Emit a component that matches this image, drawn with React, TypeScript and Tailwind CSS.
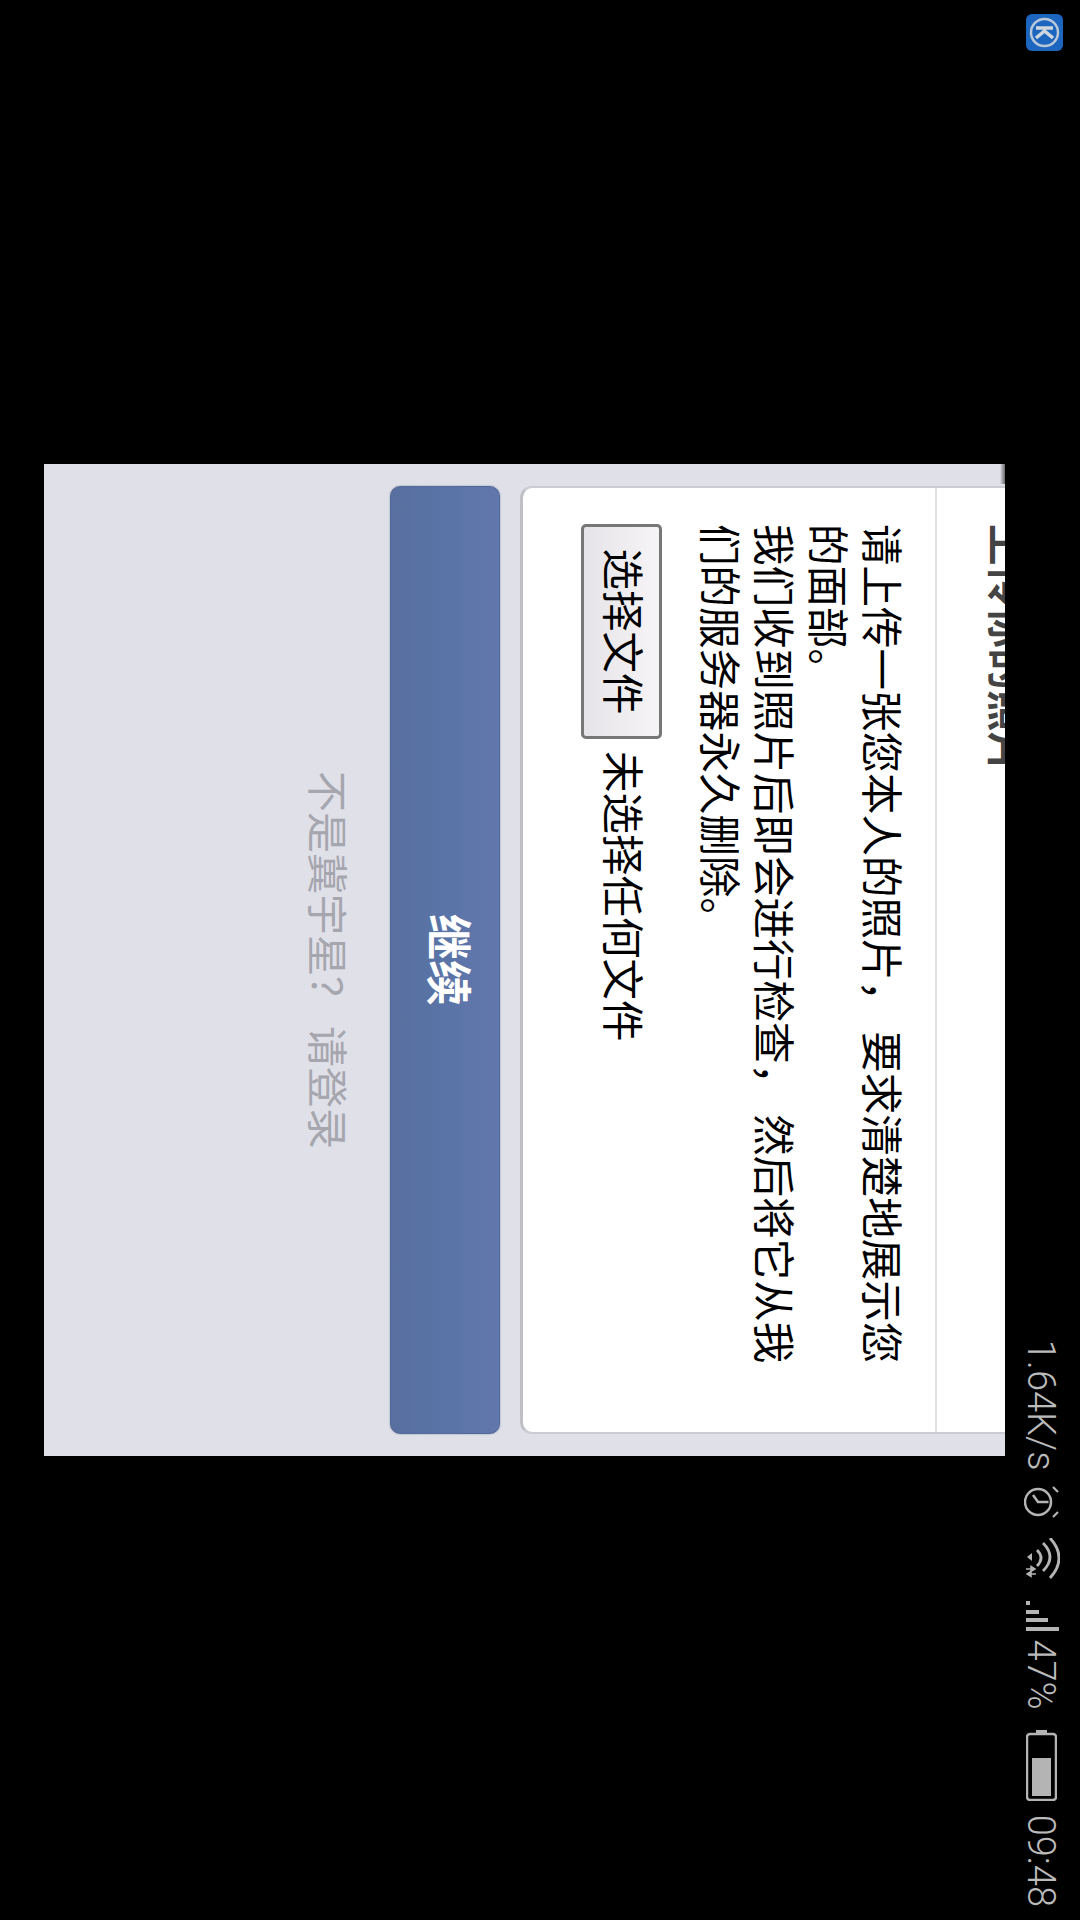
const cjk = "font-['Noto_Sans_CJK_SC','Droid_Sans_Fallback',sans-serif]";

function LogoIcon() {
  return (
    <svg width="37" height="37" viewBox="0 0 37 37" className="shrink-0">
      <rect width="37" height="37" rx="6" fill="#1c66bf" />
      <circle cx="18.5" cy="18.5" r="13.5" fill="none" stroke="#b9c7d8" strokeWidth="2.5" />
      <path d="M14 10v17M24 10l-7 8.5 7 8.5" fill="none" stroke="#cfd6de" strokeWidth="3.5" />
    </svg>
  );
}

function ClockIcon() {
  return (
    <svg width="32" height="35" viewBox="0 0 32 35" className="shrink-0 -mb-[2px]" fill="none" stroke="#b4b4b4">
      <circle cx="16" cy="21" r="13" strokeWidth="2.5" />
      <path d="M16 10.500V21L9 26" strokeWidth="2.500" />
      <path d="M1 6L6 1M26 1L31 6" strokeWidth="2.200" />
    </svg>
  );
}

function WifiIcon() {
  return (
    <svg width="42" height="34" viewBox="0 0 42 34" className="shrink-0" fill="none" stroke="#b4b4b4" strokeWidth="2.800">
      <path d="M0 10Q20 -8 40 10" />
      <path d="M5 17Q19 3 33 17" />
      <path d="M12 23Q20 15 28 23" />
      <path d="M15 28H23L19 33z" fill="#b4b4b4" stroke="none" />
      <path d="M31 34V28M28.500 29L31 25 33.500 29zM36 24V30M33.500 29L36 33 38.500 29z" fill="#b4b4b4" strokeWidth="1.500" />
    </svg>
  );
}

function SignalIcon() {
  return (
    <svg width="30" height="33" viewBox="0 0 30 33" className="shrink-0" fill="#b4b4b4">
      <rect x="0" y="29" width="4" height="4" />
      <rect x="9" y="20" width="4" height="13" />
      <rect x="17" y="11" width="4" height="22" />
      <rect x="26" y="0" width="4" height="33" />
    </svg>
  );
}

function BatteryIcon() {
  return (
    <svg width="71" height="31" viewBox="0 0 71 31" className="shrink-0">
      <rect x="0" y="10" width="4" height="11" fill="#b4b4b4" />
      <rect x="4" y="1" width="66" height="29" rx="3" fill="none" stroke="#b4b4b4" strokeWidth="2.500" />
      <rect x="28" y="6" width="38" height="19" fill="#b4b4b4" />
    </svg>
  );
}

export default function App() {
  return (
    <div className="w-[1080px] h-[1920px] overflow-hidden bg-black">
      <div className={`w-[1920px] h-[1080px] origin-top-left translate-x-[1080px] rotate-90 bg-black ${cjk}`}>
        {/* status bar */}
        <div className="relative z-10 h-[75px] bg-black flex items-end pb-[21px] pl-[14px] pr-[13px] text-[#bbbbbb] font-['Roboto',sans-serif] font-light text-[38px] leading-[30px]">
          <LogoIcon />
          <div className="ml-auto flex items-end">
            <span>1.64K/s</span>
            <span className="ml-[16px]"><ClockIcon /></span>
            <span className="ml-[20px]"><WifiIcon /></span>
            <span className="ml-[21px]"><SignalIcon /></span>
            <span className="ml-[8px]">47%</span>
            <span className="ml-[20px]"><BatteryIcon /></span>
            <span className="ml-[14px]">09:48</span>
          </div>
        </div>

        {/* page */}
        <div className="relative ml-[464px] w-[992px] h-[961px] overflow-hidden bg-[#dfe0e8] px-[22px]">
          <div className="absolute top-0 left-0 w-[20px] h-[5px] bg-gradient-to-b from-[#6a6a6e] to-[#dfe0e8]" />
          <div className="-mt-[45px] h-[530px] bg-white rounded-[12px] border-x-2 border-x-[#cbccd2] border-b-[3px] border-b-[#bfc0c6]">
            <div className="h-[115px] border-b-2 border-[#e0e1e4] flex items-end pl-[36px] pb-[51px]">
              <h1 className="text-[41.5px] leading-[44px] font-bold text-[#444]">上传你的照片</h1>
            </div>
            <div className="pl-[36px] pt-[24px]">
              <p className="w-[860px] text-[41.5px] leading-[54px] text-black">
                请上传一张您本人的照片， 要求清楚地展示您的面部。<br />
                我们收到照片后即会进行检查， 然后将它从我们的服务器永久删除。
              </p>
              <div className="mt-[33px] flex items-center gap-[12px] text-[41.5px] text-black">
                <button className="w-[215px] h-[81px] pb-[7px] rounded-[5px] border-[3px] border-[#777] bg-gradient-to-b from-[#f6f4f6] to-[#e6e4e8] text-[41.5px]">
                  选择文件
                </button>
                <span className="pb-[7px]">未选择任何文件</span>
              </div>
            </div>
          </div>
          <button className="mt-[20px] w-full h-[110px] rounded-[10px] border border-[#52689a] bg-gradient-to-b from-[#6277ab] via-[#5a74a7] to-[#586f9f] text-white font-bold text-[46px] pb-[14px] shadow-[0_0_2px_#8a93ad]">
            继续
          </button>
          <p className="mt-[35px] text-center text-[41px] leading-[50px] text-[#a6a6ae]">不是冀宇星？ 请登录</p>
        </div>
      </div>
    </div>
  );
}
